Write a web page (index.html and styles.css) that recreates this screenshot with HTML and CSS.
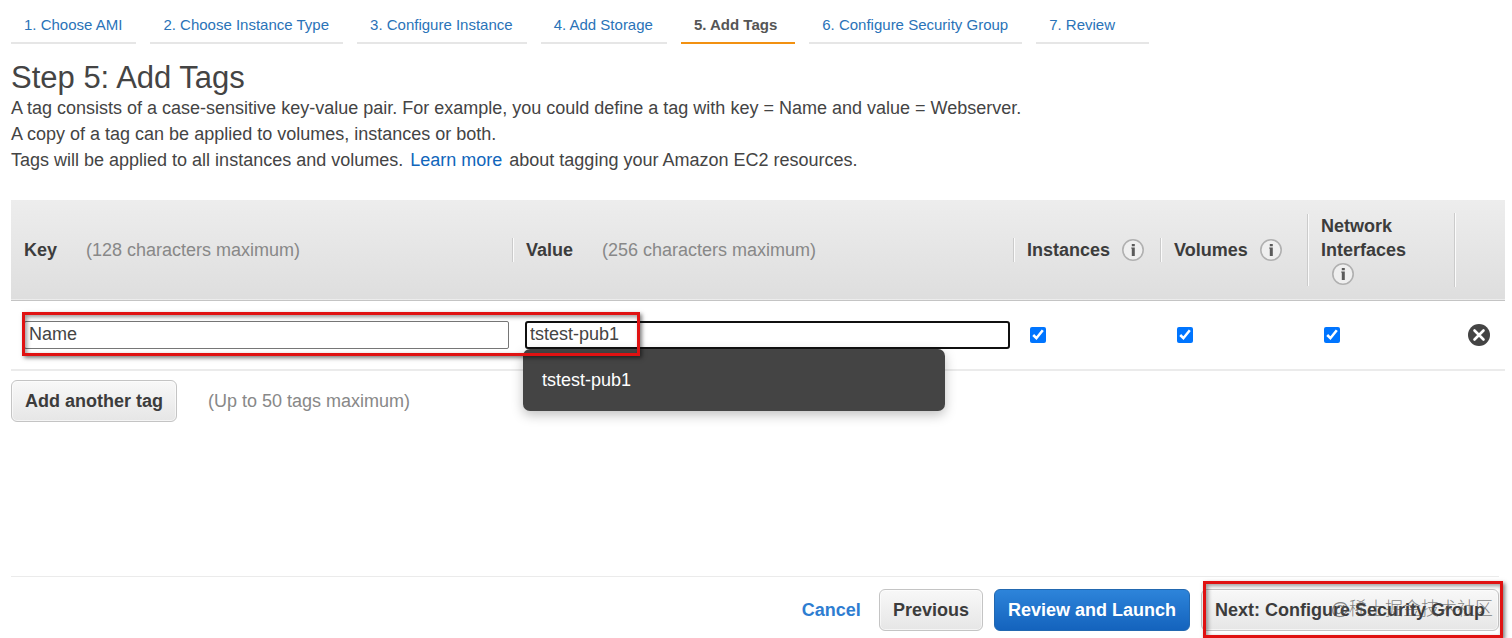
FILE: index.html
```html
<!DOCTYPE html>
<html lang="en">
<head>
<meta charset="utf-8">
<meta name="viewport" content="width=device-width, initial-scale=1">
<title>Step 5: Add Tags</title>
<link rel="stylesheet" href="styles.css">
</head>
<body>
<svg class="sprite" aria-hidden="true">
  <symbol id="info" viewBox="0 0 24 24">
    <circle cx="12" cy="12" r="10.200" fill="#efefef" stroke="#b0b0b0" stroke-width="1.600"/>
    <path d="M10.800 9.500h3v8.500h-3z M10.800 6h3v2.200h-3z" fill="#5a5a5a"/>
    <path d="M10 9.500h1v1.200h-1z" fill="#8a8a8a"/>
  </symbol>
</svg>
<nav class="steps" aria-label="Wizard steps">
  <a class="step" href="#">1. Choose AMI</a>
  <a class="step" href="#">2. Choose Instance Type</a>
  <a class="step" href="#">3. Configure Instance</a>
  <a class="step" href="#">4. Add Storage</a>
  <a class="step step-current" href="#" aria-current="step">5. Add Tags</a>
  <a class="step" href="#">6. Configure Security Group</a>
  <a class="step step-last" href="#">7. Review</a>
</nav>
<main class="content">
  <h1 class="title">Step 5: Add Tags</h1>
  <p class="intro">A tag consists of a case-sensitive key-value pair. For example, you could define a tag with key = Name and value = Webserver.</p>
  <p class="intro">A copy of a tag can be applied to volumes, instances or both.</p>
  <p class="intro">Tags will be applied to all instances and volumes. <a class="learn" href="#">Learn more</a> about tagging your Amazon EC2 resources.</p>
  <table class="tags">
    <colgroup>
      <col><col><col class="col-check"><col class="col-check"><col class="col-check"><col class="col-remove">
    </colgroup>
    <thead>
      <tr>
        <th scope="col"><div class="head">Key <span class="limit">(128 characters maximum)</span></div></th>
        <th scope="col"><div class="head">Value <span class="limit">(256 characters maximum)</span></div></th>
        <th scope="col"><div class="head">Instances <button class="info" type="button" aria-label="About instances"><svg><use href="#info"/></svg></button></div></th>
        <th scope="col"><div class="head">Volumes <button class="info" type="button" aria-label="About volumes"><svg><use href="#info"/></svg></button></div></th>
        <th scope="col"><div class="head head-tall">Network Interfaces <button class="info" type="button" aria-label="About network interfaces"><svg><use href="#info"/></svg></button></div></th>
        <th scope="col" aria-label="Remove"><div class="head head-empty"></div></th>
      </tr>
    </thead>
    <tbody>
      <tr>
        <td>
          <input class="field" type="text" value="Name" aria-label="Key">
          <div class="mark mark-row"></div>
        </td>
        <td>
          <input class="field field-active" type="text" value="tstest-pub1" aria-label="Value">
          <div class="suggestions" role="listbox" aria-label="Suggestions"><div role="option" aria-selected="false">tstest-pub1</div></div>
        </td>
        <td><input class="check" type="checkbox" checked aria-label="Instances"></td>
        <td><input class="check" type="checkbox" checked aria-label="Volumes"></td>
        <td><input class="check" type="checkbox" checked aria-label="Network Interfaces"></td>
        <td><button class="remove" type="button" aria-label="Remove tag"><svg viewBox="0 0 24 24"><circle cx="12" cy="12" r="11" fill="#444"/><path d="M7.500 7.500l9 9M16.500 7.500l-9 9" stroke="#fff" stroke-width="2.600" stroke-linecap="round"/></svg></button></td>
      </tr>
    </tbody>
  </table>
  <div class="add">
    <button class="button" type="button">Add another tag</button>
    <span class="limit-note">(Up to 50 tags maximum)</span>
  </div>
</main>
<footer class="actions">
  <a class="cancel" href="#">Cancel</a>
  <button class="button" type="button">Previous</button>
  <button class="button button-primary" type="button">Review and Launch</button>
  <div class="next">
    <button class="button" type="button">Next: Configure Security Group</button>
    <div class="mark mark-next"></div>
    <span class="watermark" lang="zh-CN">@稀土掘金技术社区</span>
  </div>
</footer>
</body>
</html>
```
FILE: styles.css
```css
* { box-sizing: border-box; }

body {
  margin: 0;
  min-height: 100vh;
  display: flex;
  flex-direction: column;
  background: #fff;
  color: #444;
  font-family: "Liberation Sans", Arial, sans-serif;
  font-size: 18px;
}

a { color: #1166bb; text-decoration: none; }

button, input { font: inherit; color: inherit; }

.sprite { position: absolute; width: 0; height: 0; }

.steps {
  display: flex;
  gap: 14px;
  padding: 6px 11px 0;
  font-size: 15px;
}

.step {
  padding: 0 14px 0 13px;
  height: 38px;
  line-height: 37px;
  border-bottom: 2px solid #e6e6e6;
  white-space: nowrap;
  color: #2a73b8;
}

.step-current {
  padding-right: 18px;
  color: #555;
  font-weight: bold;
  border-bottom-color: #f29111;
}

.step-last { min-width: 113px; }

.content { flex: 1; padding: 16px 7px 0 11px; }

.title {
  margin: 0;
  font-size: 31px;
  line-height: 35px;
  font-weight: normal;
}

.intro { margin: 0; line-height: 26px; }

.learn { margin: 0 2px; }

.tags {
  width: 100%;
  margin-top: 27px;
  border-collapse: collapse;
  table-layout: fixed;
}

.col-check { width: 147px; }
.col-remove { width: 51px; }

thead tr {
  height: 100px;
  background: linear-gradient(#ededed, #dedede);
  border-bottom: 1px solid #c4c4c4;
}

th { padding: 0; text-align: left; vertical-align: middle; color: #3c3c3c; }

.head {
  padding: 0 14px 0 13px;
  line-height: 24px;
  border-left: 1px solid transparent;
}

th + th .head {
  border-left-color: #cbcbcb;
  box-shadow: inset 1px 0 #fbfbfb;
}

th:first-child .head { padding-left: 12px; }

.head-tall { padding-right: 40px; }
.head-empty { height: 74px; }

.limit { margin-left: 24px; color: #888; font-weight: normal; }

.info {
  width: 24px;
  height: 24px;
  margin-left: 6px;
  padding: 0;
  border: 0;
  background: none;
  vertical-align: top;
}

.head-tall .info { margin-left: 10px; }

.info svg, .remove svg { display: block; width: 24px; height: 24px; }

.tags tbody tr { height: 70px; border-bottom: 2px solid #ebebeb; }

td { padding: 0 3px 0 13px; vertical-align: middle; position: relative; }

.field {
  display: block;
  width: 100%;
  height: 28px;
  padding: 0 4px;
  border: 1px solid #767676;
  border-radius: 2px;
  background: #fff;
  outline: none;
}

.field-active { padding: 0 3px; border: 2px solid #101010; border-radius: 3px; }

.suggestions {
  position: absolute;
  z-index: 1;
  top: 48px;
  left: 11px;
  width: 422px;
  padding: 0 19px;
  line-height: 62px;
  border-radius: 7px;
  background: #444;
  color: #fff;
  box-shadow: 0 4px 12px rgba(0, 0, 0, 0.25);
}

.mark {
  position: absolute;
  z-index: 2;
  border: 3px solid #e01212;
  box-shadow: 2px 2px 4px rgba(0, 0, 0, 0.5), inset 2px 2px 4px rgba(0, 0, 0, 0.4);
  pointer-events: none;
}

.mark-row { top: 11px; left: 11px; right: -128px; height: 44px; }

.check {
  display: block;
  width: 16px;
  height: 16px;
  margin: 0 4px;
  accent-color: #0075ff;
}

.remove { display: block; padding: 0; border: 0; background: none; }

.add {
  display: flex;
  align-items: center;
  gap: 31px;
  margin-top: 9px;
}

.limit-note { color: #888; }

.button {
  height: 42px;
  padding: 0 13px;
  border: 1px solid #c4c4c4;
  border-radius: 6px;
  background: linear-gradient(#f8f8f8, #e6e6e6);
  box-shadow: inset 0 0 0 1px rgba(255, 255, 255, 0.6);
  color: #3c3c3c;
  font-weight: bold;
  white-space: nowrap;
}

.button-primary {
  border-color: #2268b0;
  background: linear-gradient(#2d84da, #1463bd);
  box-shadow: none;
  color: #fff;
}

.actions {
  display: flex;
  justify-content: flex-end;
  align-items: center;
  gap: 11px;
  margin: 0 13px 0 11px;
  padding: 12px 0 7px;
  border-top: 1px solid #ebebeb;
}

.cancel { margin-right: 7px; color: #2e7dd1; font-weight: bold; }

.next { position: relative; }

.mark-next { top: -8px; bottom: -7px; left: 2px; right: -4px; }

.watermark {
  position: absolute;
  z-index: 3;
  right: 6px;
  top: 7px;
  color: rgba(80, 80, 80, 0.7);
  font-family: "Liberation Sans", "Noto Sans CJK SC", sans-serif;
  font-size: 18px;
  font-weight: 300;
  line-height: 26px;
  white-space: nowrap;
}
```
